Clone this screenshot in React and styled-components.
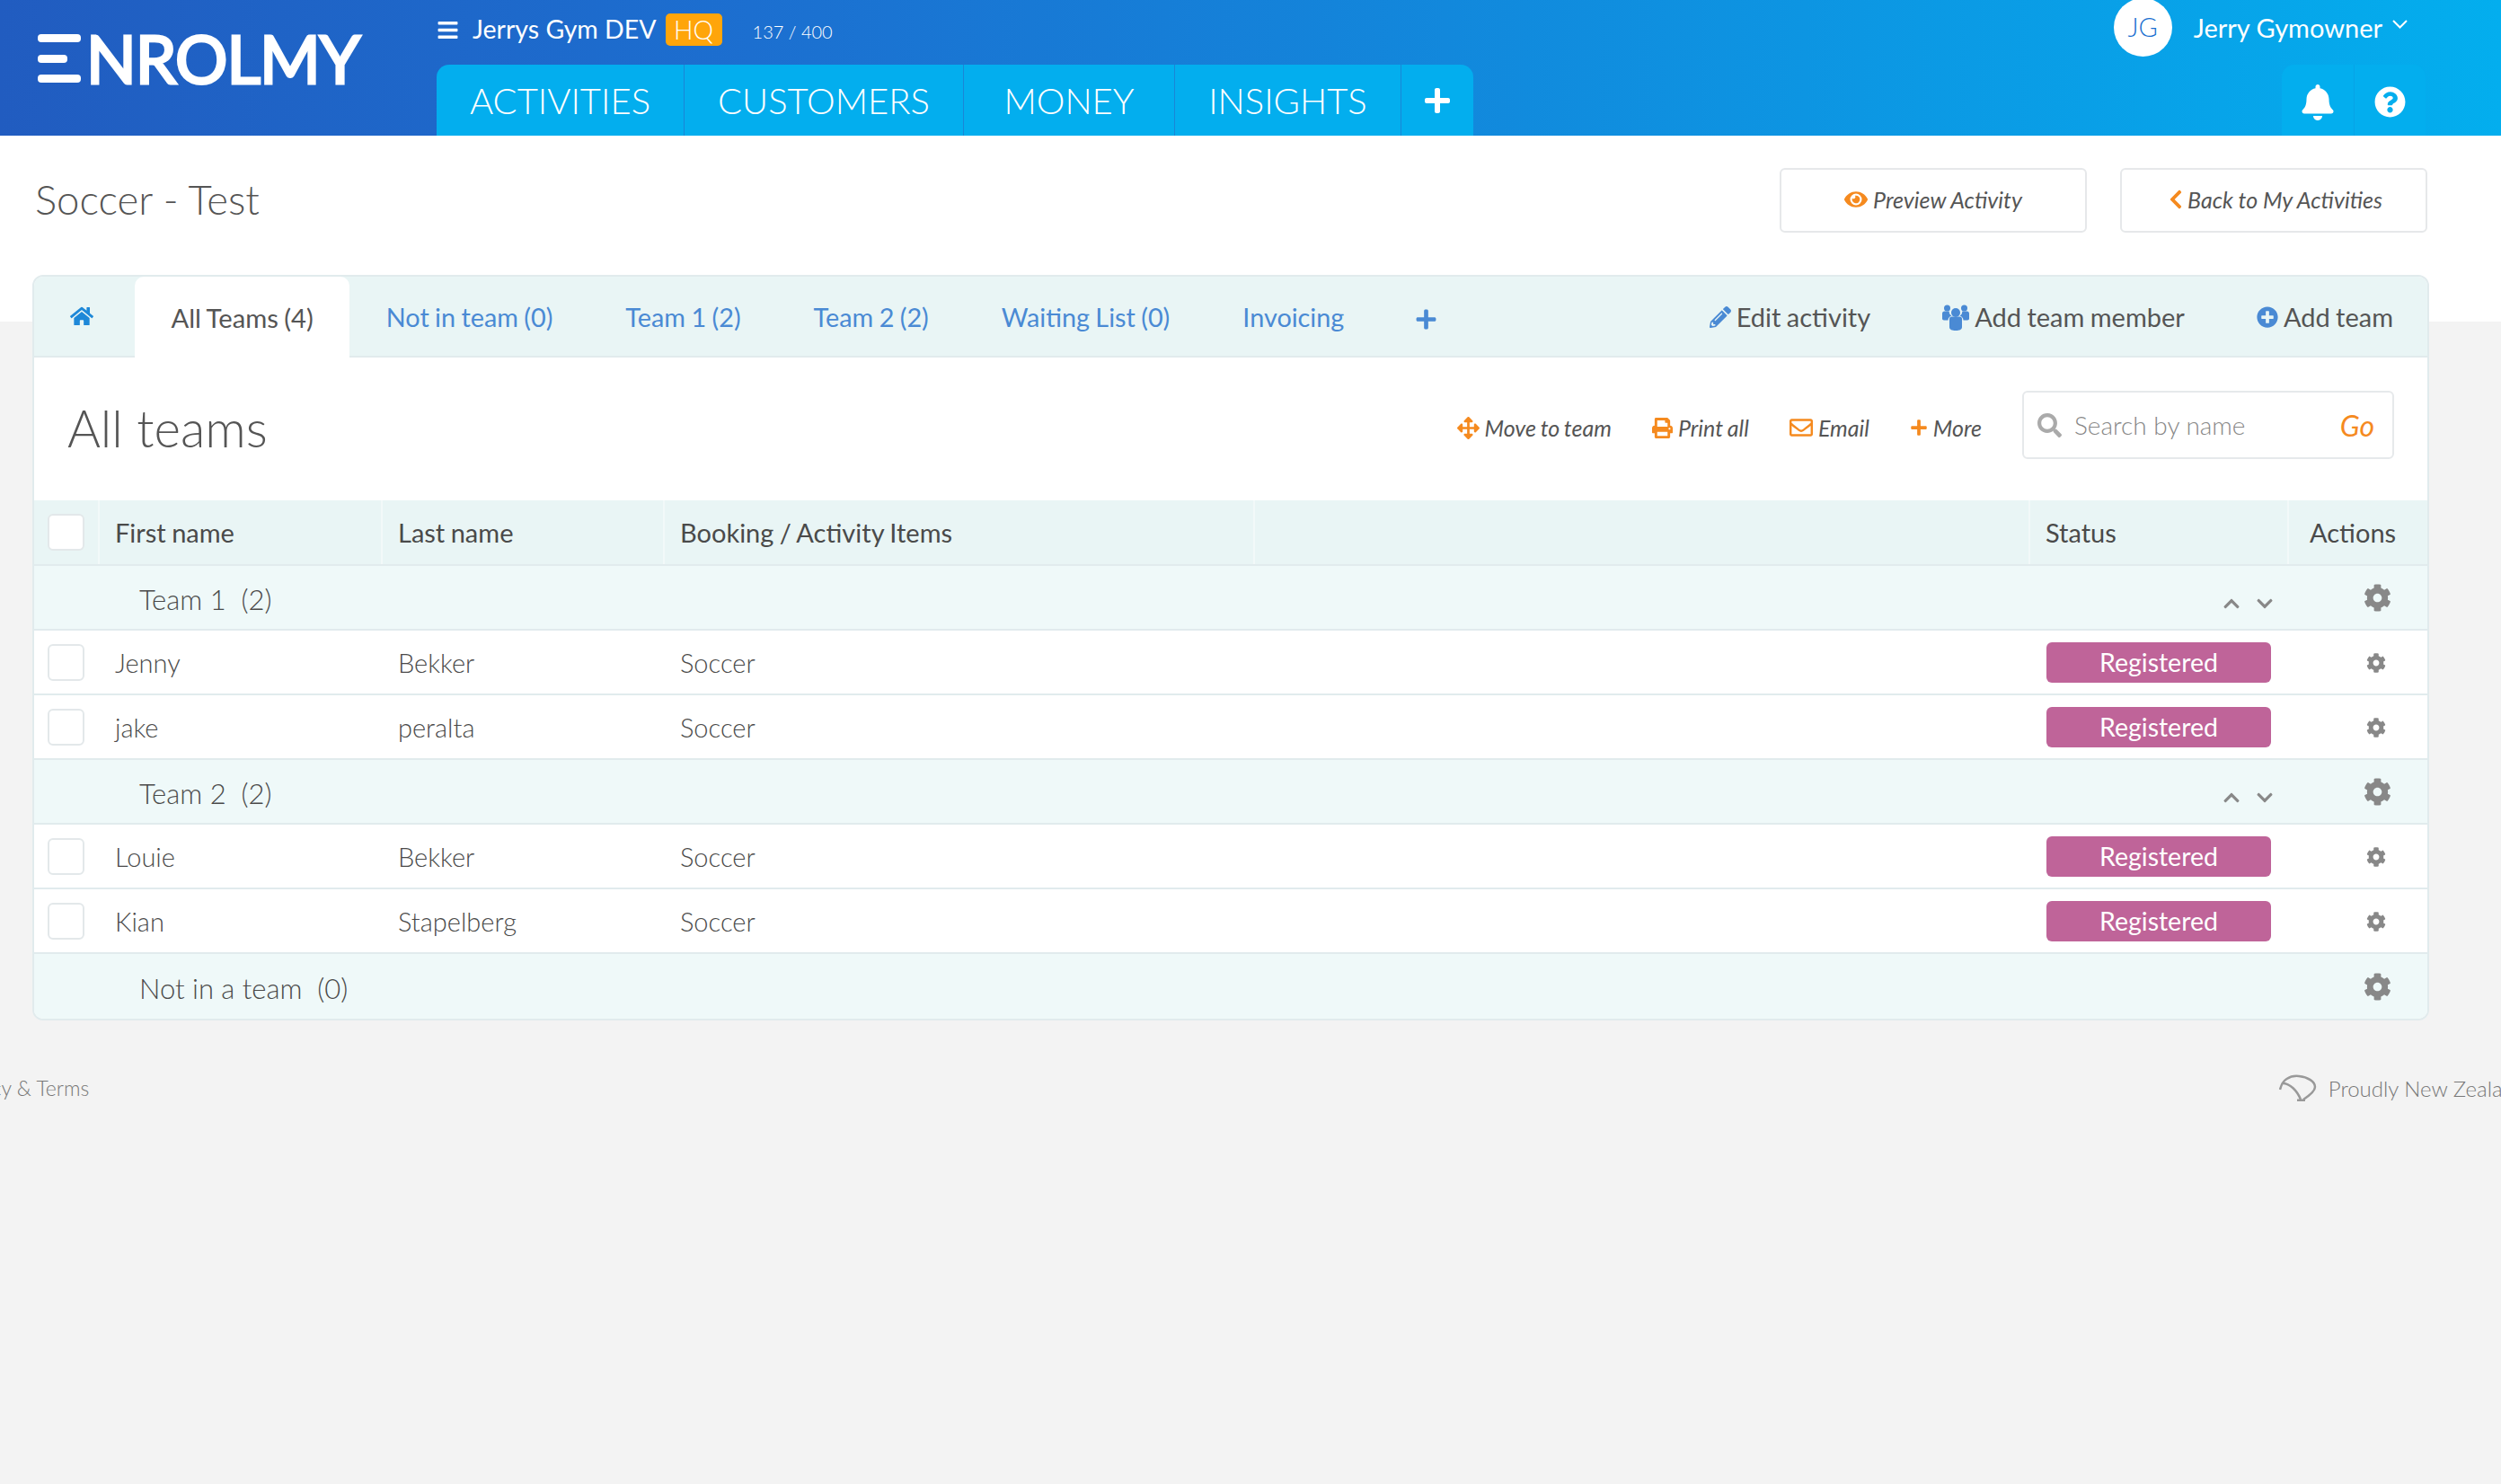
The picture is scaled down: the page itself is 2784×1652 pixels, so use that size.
import React from 'react';
import styled, { createGlobalStyle } from 'styled-components';
import {
  FaBars, FaPlus, FaBell, FaQuestionCircle, FaEye, FaChevronLeft, FaHome, FaPencilAlt,
  FaPlusCircle, FaArrowsAlt, FaPrint, FaRegEnvelope, FaSearch, FaCog, FaChevronUp, FaChevronDown,
} from 'react-icons/fa';

const ORANGE = '#f58a1f';
const BLUE = '#4a8ad4';
const TINT = '#e9f5f5';
const LINE = '#e1ebed';
const COLUMNS = '71px 315px 314px 657px 863px 288px 158px';

const GlobalStyle = createGlobalStyle`
  html, body {
    margin: 0;
    background: #f3f3f3;
  }
  body {
    font-family: Lato, "Open Sans", sans-serif;
    color: #555;
    overflow-x: hidden;
  }
`;

const Page = styled.div`
  min-height: 1652px;
  overflow: hidden;
`;

const Header = styled.header`
  height: 151px;
  display: flex;
  background: linear-gradient(to right, #215cc0 0%, #1c6fd0 30%, #03aeee 100%);
  color: #fff;
`;

const LogoArea = styled.div`
  width: 486px;
  flex: none;
  display: flex;
  align-items: flex-start;
  padding: 38px 0 0 42px;
  box-sizing: border-box;
  gap: 6px;
`;

const LogoMark = styled.div`
  width: 48px;
  height: 54px;
  display: flex;
  flex-direction: column;
  justify-content: space-between;
`;

const LogoBar = styled.span`
  display: block;
  height: 9px;
  width: ${props => props.$short ? '33px' : '48px'};
  background: #fff;
  border-radius: 4px;
`;

const LogoText = styled.span`
  font-size: 73px;
  line-height: 54px;
  font-weight: 400;
  letter-spacing: -1px;
  -webkit-text-stroke: 3px #fff;
  stroke-linejoin: round;
`;

const HeaderMain = styled.div`
  flex: 1;
  display: flex;
  flex-direction: column;
  justify-content: space-between;
`;

const OrgRow = styled.div`
  display: flex;
  align-items: center;
  height: 36px;
  margin-top: 15px;
  font-size: 28.500px;
`;

const OrgName = styled.span`
  margin-top: -2px;
`;

const MenuIcon = styled(FaBars)`
  margin-right: 15px;
`;

const HqBadge = styled.span`
  margin-left: 10px;
  width: 63px;
  height: 36px;
  background: #ffa50a;
  border-radius: 5px;
  display: flex;
  align-items: center;
  justify-content: center;
  font-size: 28.500px;
  font-weight: 300;
`;

const Quota = styled.span`
  margin-left: 34px;
  font-size: 20px;
  font-weight: 300;
  padding-top: 4px;
`;

const NavTabs = styled.nav`
  display: flex;
  align-self: flex-start;
  height: 79px;
  background: #03aeee;
  border-radius: 14px 14px 0 0;
`;

const NavTab = styled.a`
  display: flex;
  align-items: center;
  padding: 0 ${props => props.$wide ? '44.500px' : '37px'};
  font-size: 40px;
  font-weight: 300;
  border-left: ${props => props.$first ? 'none' : '1px solid #1a86d6'};
`;

const NavPlus = styled(FaPlus)`
  margin: 0 -13px;
`;

const HeaderRight = styled.div`
  flex: none;
  display: flex;
  flex-direction: column;
  align-items: flex-end;
  justify-content: space-between;
  padding-right: 84px;
`;

const UserRow = styled.div`
  display: flex;
  align-items: center;
  height: 61px;
  padding-right: 20px;
  font-size: 29px;
`;

const Avatar = styled.div`
  width: 65px;
  height: 65px;
  margin: 0 24px 0 0;
  padding-bottom: 3px;
  box-sizing: border-box;
  border-radius: 50%;
  background: #fff;
  color: #1a6fd0;
  font-size: 29px;
  font-weight: 300;
  display: flex;
  align-items: center;
  justify-content: center;
`;

const UserCaret = styled.svg`
  width: 17px;
  height: 10px;
  margin: -8px 0 0 11px;
`;

const IconTabs = styled.div`
  display: flex;
  height: 79px;
  background: #03aeee;
  border-radius: 14px 14px 0 0;
`;

const IconTab = styled.div`
  width: 80px;
  display: flex;
  align-items: center;
  justify-content: center;
  padding-top: 4px;
  box-sizing: border-box;
  & + & {
    border-left: 1px solid #06a3e6;
  }
`;

const TitlePanel = styled.section`
  height: 207px;
  padding: 36px 82px 0 39px;
  box-sizing: border-box;
  background: #fff;
  display: flex;
  align-items: flex-start;
  justify-content: space-between;
`;

const PageTitle = styled.h1`
  margin: 0;
  font-size: 45.500px;
  line-height: 70px;
  font-weight: 300;
`;

const TitleActions = styled.div`
  display: flex;
  gap: 37px;
`;

const OutlineButton = styled.a`
  width: 342px;
  height: 72px;
  padding-bottom: 2px;
  box-sizing: border-box;
  border: 2px solid #e6e8ea;
  border-radius: 6px;
  background: #fff;
  display: flex;
  align-items: center;
  justify-content: center;
  gap: ${props => props.$tight ? '1px' : '6px'};
  font-size: 25px;
  font-style: italic;
  color: #555;
  svg {
    color: ${ORANGE};
  }
`;

const Card = styled.main`
  margin: -52px 80px 0 36px;
  background: #fff;
  border: 2px solid ${LINE};
  border-radius: 12px;
  overflow: hidden;
`;

const TabBar = styled.div`
  height: 88px;
  background: ${TINT};
  border-bottom: 2px solid ${LINE};
  display: flex;
  align-items: stretch;
  box-sizing: content-box;
`;

const HomeTab = styled.a`
  width: 112px;
  box-sizing: border-box;
  padding-right: 6px;
  display: flex;
  align-items: center;
  justify-content: center;
  color: #1e88d8;
`;

const Tab = styled.a`
  display: flex;
  align-items: center;
  padding: 1px 40.500px 0;
  font-size: ${props => props.$active ? '29.200px' : '28.800px'};
  word-spacing: -1px;
  color: ${props => props.$active ? '#555' : BLUE};
  background: ${props => props.$active ? '#fff' : 'transparent'};
  border-radius: ${props => props.$active ? '10px 10px 0 0' : '0'};
  margin-bottom: ${props => props.$active ? '-2px' : '0'};
`;

const AddTab = styled.a`
  display: flex;
  align-items: center;
  padding: 6px 0 0 38px;
  color: ${BLUE};
`;

const TabActions = styled.div`
  margin-left: auto;
  padding: 1px 38px 0 0;
  display: flex;
  align-items: center;
  gap: 80px;
`;

const TabAction = styled.a`
  display: flex;
  align-items: center;
  gap: 6px;
  font-size: 29px;
  word-spacing: -1px;
  color: #555;
  svg {
    color: ${BLUE};
  }
`;

const Toolbar = styled.div`
  height: 159px;
  box-sizing: border-box;
  padding: 0 37px 3px;
  display: flex;
  align-items: center;
`;

const SectionTitle = styled.h2`
  margin: 0 auto 0 0;
  font-size: 56.500px;
  font-weight: 300;
`;

const ToolActions = styled.div`
  display: flex;
  align-items: center;
  gap: 45px;
  margin-right: 45px;
`;

const ToolAction = styled.a`
  display: flex;
  align-items: center;
  gap: 6px;
  font-size: 25px;
  font-style: italic;
  word-spacing: -1px;
  color: #555;
  svg {
    color: ${ORANGE};
  }
`;

const SearchBox = styled.div`
  width: 414px;
  height: 76px;
  margin-top: -6px;
  box-sizing: border-box;
  border: 2px solid #e6e9eb;
  border-radius: 6px;
  padding: 0 20px 0 15px;
  display: flex;
  align-items: center;
  gap: 14px;
  color: #aaa;
`;

const SearchInput = styled.input`
  flex: 1;
  min-width: 0;
  border: none;
  outline: none;
  background: none;
  font: 300 28px Lato, sans-serif;
  padding: 0;
  &::placeholder {
    color: #888;
    opacity: 1;
  }
`;

const GoLink = styled.a`
  font-size: 32px;
  font-style: italic;
  color: ${ORANGE};
`;

const Row = styled.div`
  display: grid;
  grid-template-columns: ${COLUMNS};
  height: 72px;
  box-sizing: border-box;
  border-bottom: 2px solid ${LINE};
  align-items: center;
  font-size: 29px;
  font-weight: 300;
  color: #4a4a4a;
`;

const HeadRow = styled(Row)`
  height: 73px;
  background: ${TINT};
  font-weight: 400;
  align-items: stretch;
  word-spacing: -1px;
`;

const HeadCell = styled.div`
  display: flex;
  align-items: center;
  padding-left: ${props => props.$inset ? '23px' : '17px'};
  border-left: 2px solid #f2f9f9;
`;

const GroupRow = styled(Row)`
  background: #eff9f9;
  border-bottom: ${props => props.$last ? 'none' : `2px solid ${LINE}`};
`;

const GroupName = styled.div`
  grid-column: 1 / 6;
  padding: 3px 0 0 117px;
  font-size: 31px;
  white-space: pre;
`;

const Sorters = styled.div`
  grid-column: 6;
  display: flex;
  justify-content: flex-end;
  gap: 17px;
  padding: 14px 15px 0 0;
  color: #888;
`;

const Cell = styled.div`
  padding-left: 19px;
`;

const CheckCell = styled.div`
  display: flex;
  align-items: center;
  padding-left: 15px;
`;

const CheckBox = styled.span`
  display: block;
  width: 41px;
  height: 41px;
  box-sizing: border-box;
  background: #fff;
  border: 2px solid #e3e8ea;
  border-radius: 6px;
`;

const StatusBadge = styled.div`
  margin-left: 20px;
  width: 250px;
  height: 45px;
  background: #bf6499;
  border-radius: 6px;
  color: #fff;
  font-size: 28.500px;
  font-weight: 400;
  display: flex;
  align-items: center;
  justify-content: center;
`;

const ActionCell = styled.div`
  grid-column: 7;
  display: flex;
  align-items: center;
  padding: 1px 0 0 ${props => props.$big ? '85px' : '88px'};
  color: #888;
`;

const Footer = styled.footer`
  margin: 60px -28px 0 -58px;
  display: flex;
  justify-content: space-between;
  align-items: center;
  font-size: 23px;
  font-weight: 300;
  color: #777;
`;

const Proudly = styled.div`
  display: flex;
  align-items: center;
  gap: 13px;
  font-size: 24px;
`;

// the team icon in the reference is taller than the packaged one
const TeamIcon = () => (
  <svg width="30" height="30" viewBox="0 0 30 30" fill="currentColor">
    <circle cx="15" cy="10" r="5" />
    <circle cx="5.500" cy="5" r="3.500" />
    <circle cx="24.500" cy="5" r="3.500" />
    <path d="M8 17c0-1.500 1-2.500 2.500-2.500h9c1.500 0 2.500 1 2.500 2.500v9c0 3-3 4-7 4s-7-1-7-4z" />
    <path d="M0 11c0-1.500 1-2.500 2.500-2.500h5.200C7.700 11 8.800 13 10.500 13.500 8 14.500 6.500 16 6.500 18.500H2c-1.300 0-2-.7-2-2z" />
    <path d="M30 11c0-1.500-1-2.500-2.500-2.500h-5.200c0 2.500-1.100 4.500-2.800 5 2.500 1 4 2.500 4 5H28c1.300 0 2-.7 2-2z" />
  </svg>
);

const KoruIcon = () => (
  <svg width="42" height="30" viewBox="0 0 42 30" fill="none" stroke="#999" strokeWidth="2.500">
    <path d="M1 17C3 6 12 1 22 2c10 1 18 6 18 12 0 5-7 10-13 14" />
    <path d="M4 10c8 0 16 8 20 18" />
    <path d="M20 29h9" strokeWidth="3" />
  </svg>
);

const Sorter = () => (
  <Sorters>
    <FaChevronUp size={20} />
    <FaChevronDown size={20} />
  </Sorters>
);

const Group = ({ name, count, sortable, last }) => (
  <GroupRow $last={last}>
    <GroupName>{name}  ({count})</GroupName>
    {sortable && <Sorter />}
    <ActionCell $big><FaCog size={31} /></ActionCell>
  </GroupRow>
);

const Member = ({ first, last }) => (
  <Row>
    <CheckCell><CheckBox /></CheckCell>
    <Cell>{first}</Cell>
    <Cell>{last}</Cell>
    <Cell>Soccer</Cell>
    <span />
    <StatusBadge>Registered</StatusBadge>
    <ActionCell><FaCog size={22} /></ActionCell>
  </Row>
);

const App = () => (
  <Page>
    <GlobalStyle />
    <Header>
      <LogoArea>
        <LogoMark>
          <LogoBar />
          <LogoBar $short />
          <LogoBar />
        </LogoMark>
        <LogoText>NROLMY</LogoText>
      </LogoArea>
      <HeaderMain>
        <OrgRow>
          <MenuIcon size={25} />
          <OrgName>Jerrys Gym DEV</OrgName>
          <HqBadge>HQ</HqBadge>
          <Quota>137 / 400</Quota>
        </OrgRow>
        <NavTabs>
          <NavTab $first>ACTIVITIES</NavTab>
          <NavTab>CUSTOMERS</NavTab>
          <NavTab $wide>MONEY</NavTab>
          <NavTab>INSIGHTS</NavTab>
          <NavTab><NavPlus size={32} /></NavTab>
        </NavTabs>
      </HeaderMain>
      <HeaderRight>
        <UserRow>
          <Avatar>JG</Avatar>
          Jerry Gymowner
          <UserCaret viewBox="0 0 17 10" fill="none" stroke="#fff" strokeWidth="2">
            <path d="M1 1l7.500 7.500L16 1" />
          </UserCaret>
        </UserRow>
        <IconTabs>
          <IconTab><FaBell size={40} /></IconTab>
          <IconTab><FaQuestionCircle size={35} /></IconTab>
        </IconTabs>
      </HeaderRight>
    </Header>

    <TitlePanel>
      <PageTitle>Soccer - Test</PageTitle>
      <TitleActions>
        <OutlineButton><FaEye size={26} />Preview Activity</OutlineButton>
        <OutlineButton $tight><FaChevronLeft size={24} />Back to My Activities</OutlineButton>
      </TitleActions>
    </TitlePanel>

    <Card>
      <TabBar>
        <HomeTab><FaHome size={26} /></HomeTab>
        <Tab $active>All Teams (4)</Tab>
        <Tab>Not in team (0)</Tab>
        <Tab>Team 1 (2)</Tab>
        <Tab>Team 2 (2)</Tab>
        <Tab>Waiting List (0)</Tab>
        <Tab>Invoicing</Tab>
        <AddTab><FaPlus size={25} /></AddTab>
        <TabActions>
          <TabAction><FaPencilAlt size={24} />Edit activity</TabAction>
          <TabAction><TeamIcon />Add team member</TabAction>
          <TabAction><FaPlusCircle size={24} />Add team</TabAction>
        </TabActions>
      </TabBar>

      <Toolbar>
        <SectionTitle>All teams</SectionTitle>
        <ToolActions>
          <ToolAction><FaArrowsAlt size={25} />Move to team</ToolAction>
          <ToolAction><FaPrint size={23} />Print all</ToolAction>
          <ToolAction><FaRegEnvelope size={26} />Email</ToolAction>
          <ToolAction><FaPlus size={20} />More</ToolAction>
        </ToolActions>
        <SearchBox>
          <FaSearch size={27} />
          <SearchInput placeholder="Search by name" />
          <GoLink>Go</GoLink>
        </SearchBox>
      </Toolbar>

      <HeadRow>
        <CheckCell><CheckBox /></CheckCell>
        <HeadCell>First name</HeadCell>
        <HeadCell>Last name</HeadCell>
        <HeadCell>Booking / Activity Items</HeadCell>
        <HeadCell />
        <HeadCell>Status</HeadCell>
        <HeadCell $inset>Actions</HeadCell>
      </HeadRow>

      <Group name="Team 1" count={2} sortable />
      <Member first="Jenny" last="Bekker" />
      <Member first="jake" last="peralta" />
      <Group name="Team 2" count={2} sortable />
      <Member first="Louie" last="Bekker" />
      <Member first="Kian" last="Stapelberg" />
      <Group name="Not in a team" count={0} last />
    </Card>

    <Footer>
      <span>Privacy &amp; Terms</span>
      <Proudly>
        <KoruIcon />
        <span>Proudly New Zealand</span>
      </Proudly>
    </Footer>
  </Page>
);

export default App;
